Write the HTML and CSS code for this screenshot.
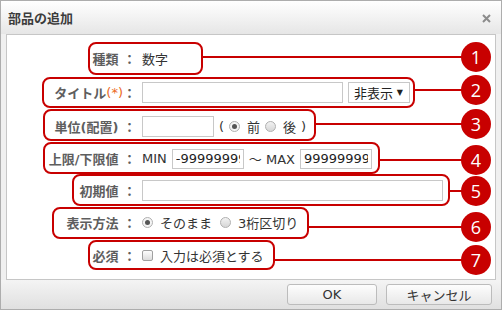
FILE: index.html
```html
<!DOCTYPE html>
<html lang="ja">
  <head>
    <meta charset="utf-8" />
    <title>部品の追加</title>
    <link rel="stylesheet" href="styles.css">
  </head>

  <body>
    <div class="dialog">
      <div class="titlebar">
        <span class="title">部品の追加</span>
        <svg class="close" width="9" height="9" viewBox="0 0 9 9">
          <path d="M1 1 L8 8 M8 1 L1 8" stroke="#8c8c8c" stroke-width="2" fill="none"/>
        </svg>
      </div>

      <div class="body">
        <div class="panel">
          <div class="form">
            <div class="label">種類 ：</div>
            <div class="value">数字</div>

            <div class="label">タイトル<span class="req">(*)</span> ：</div>
            <div class="value">
              <input class="text title-input" type="text" value="">
              <span class="select">非表示 <span class="arrow">▼</span></span>
            </div>

            <div class="label">単位(配置) ：</div>
            <div class="value">
              <input class="text short" type="text" value="">
              <span>(</span>
              <span class="radio on"></span><span class="rtext">前</span>
              <span class="radio"></span><span class="rtext">後</span>
              <span>)</span>
            </div>

            <div class="label">上限/下限値 ：</div>
            <div class="value">
              <span>MIN</span>
              <input class="text short num-input" type="text" value="-99999999">
              <span>～ MAX</span>
              <input class="text short num-input" type="text" value="99999999">
            </div>

            <div class="label">初期値 ：</div>
            <div class="value">
              <input class="text wide" type="text" value="">
            </div>

            <div class="label">表示方法 ：</div>
            <div class="value">
              <span class="radio on"></span><span class="rtext">そのまま</span>
              <span class="radio gap"></span><span class="rtext">3桁区切り</span>
            </div>

            <div class="label">必須 ：</div>
            <div class="value">
              <span class="check"></span><span class="rtext">入力は必須とする</span>
            </div>
          </div>
        </div>
      </div>

      <div class="footer">
        <button type="button" class="ok">OK</button>
        <button type="button" class="cancel">キャンセル</button>
      </div>

      <!-- red annotation markers over the form -->
      <div class="callouts">
        <div class="callout c1"><span class="lead"></span><span class="num">1</span></div>
        <div class="callout c2"><span class="lead"></span><span class="num">2</span></div>
        <div class="callout c3"><span class="lead"></span><span class="num">3</span></div>
        <div class="callout c4"><span class="lead"></span><span class="num">4</span></div>
        <div class="callout c5"><span class="lead"></span><span class="num">5</span></div>
        <div class="callout c6"><span class="lead"></span><span class="num">6</span></div>
        <div class="callout c7"><span class="lead"></span><span class="num">7</span></div>
      </div>
    </div>
  </body>
</html>
```

FILE: styles.css
```css
body {
  margin: 0;
  padding: 0;
  font-family: "DejaVu Sans", "Noto Sans CJK JP", sans-serif;
  font-size: 13px;
  color: #333;
}

.dialog {
  position: relative;
  width: 502px;
  height: 310px;
  box-sizing: border-box;
  border: 1px solid #adadad;
  background: #f0f0f0;
  display: flex;
  flex-direction: column;
}

.titlebar {
  height: 33px;
  flex: none;
  display: flex;
  align-items: center;
  justify-content: space-between;
  padding: 0 10px 0 7px;
  background: linear-gradient(#ffffff, #e6e6e6);
}

.title {
  font-family: "Noto Sans CJK JP", sans-serif;
  font-weight: bold;
  color: #3c3c3c;
}

.close {
  margin-top: 2px;
}

.body {
  flex: none;
  padding: 0 5px;
}

.panel {
  height: 246px;
  box-sizing: border-box;
  border: 1px solid #c6c6c6;
  background: #fff;
  padding-top: 6px;
}

.form {
  display: grid;
  grid-template-columns: 129px auto;
  grid-template-rows: 34px 35px 32px 33px 31px 33px 32px;
  column-gap: 6px;
}

.label {
  display: flex;
  align-items: center;
  justify-content: flex-end;
  font-weight: bold;
  color: #5e5e5e;
  white-space: nowrap;
}

.req {
  font-weight: normal;
  color: #ec6a1e;
}

.value {
  display: flex;
  align-items: center;
  gap: 5px;
  white-space: nowrap;
}

.text {
  box-sizing: border-box;
  height: 21px;
  border: 1px solid #c8c8c8;
  padding: 0 3px;
  font-family: "DejaVu Sans", sans-serif;
  font-size: 13px;
  color: #222;
  outline: none;
}

.title-input {
  width: 201px;
}

.short {
  width: 72px;
}

.num-input {
  height: 20px;
}

.wide {
  width: 301px;
}

.select {
  box-sizing: border-box;
  width: 62px;
  height: 21px;
  display: inline-flex;
  align-items: center;
  justify-content: space-between;
  padding: 0 6px 0 5px;
  border: 1px solid #c8c8c8;
  background: #fff;
  color: #222;
}

.arrow {
  font-size: 8px;
}

.radio {
  position: relative;
  width: 11px;
  height: 11px;
  box-sizing: border-box;
  border-radius: 50%;
  border: 1px solid #b0b0b0;
  background: linear-gradient(#f2f2f2, #d6d6d6);
  flex: none;
}

.radio.on {
  background: #f4f4f4;
}

.radio.on::after {
  content: "";
  position: absolute;
  left: 2px;
  top: 2px;
  width: 5px;
  height: 5px;
  border-radius: 50%;
  background: #555;
}

.radio.gap {
  margin-left: 3px;
}

.rtext {
  margin-left: 2px;
  color: #333;
}

.check {
  width: 11px;
  height: 11px;
  box-sizing: border-box;
  border: 1px solid #a0a0a0;
  border-radius: 2px;
  background: linear-gradient(#fdfdfd, #dcdcdc);
  flex: none;
}

.footer {
  flex: 1;
  display: flex;
  justify-content: flex-end;
  align-items: flex-start;
  gap: 9px;
  padding: 4px 9px 0 0;
  background: linear-gradient(#f4f4f4, #e0e0e0);
}

button {
  height: 21px;
  padding: 0;
  border: 1px solid #bcbcbc;
  border-radius: 3px;
  background: linear-gradient(#fdfdfd, #e8e8e8);
  font-family: "DejaVu Sans", "Noto Sans CJK JP", sans-serif;
  font-size: 13px;
  color: #333;
}

.ok {
  width: 90px;
}

.cancel {
  width: 106px;
}

/* annotation layer */
.callouts {
  position: absolute;
  top: -1px;
  left: -1px;
  width: 502px;
  height: 310px;
  pointer-events: none;
}

.callout {
  position: absolute;
  left: var(--x);
  top: var(--y);
  width: var(--w);
  height: var(--h);
  box-sizing: border-box;
  border: 2px solid #c80000;
  border-radius: 8px;
}

.lead {
  position: absolute;
  left: calc(var(--w) - 4px);
  top: calc(var(--ly) - var(--y) - 3px);
  width: calc(465px - var(--x) - var(--w));
  height: 2px;
  background: #c80000;
}

.num {
  position: absolute;
  left: calc(459px - var(--x));
  top: calc(var(--ly) - var(--y) - 17px);
  width: 30px;
  height: 30px;
  border-radius: 50%;
  background: #c80000;
  color: #fff;
  font-family: "Open Sans", sans-serif;
  font-size: 18px;
  line-height: 30px;
  text-align: center;
}

.c1 { --x: 88px; --y: 42px; --w: 115px; --h: 33px; --ly: 57px; }
.c2 { --x: 42px; --y: 77px; --w: 373px; --h: 31px; --ly: 90px; }
.c3 { --x: 43px; --y: 109px; --w: 273px; --h: 32px; --ly: 124px; }
.c4 { --x: 43px; --y: 142px; --w: 337px; --h: 32px; --ly: 160px; }
.c5 { --x: 72px; --y: 174px; --w: 378px; --h: 32px; --ly: 191px; }
.c6 { --x: 52px; --y: 207px; --w: 257px; --h: 32px; --ly: 227px; }
.c7 { --x: 88px; --y: 240px; --w: 187px; --h: 30px; --ly: 260px; }
```
